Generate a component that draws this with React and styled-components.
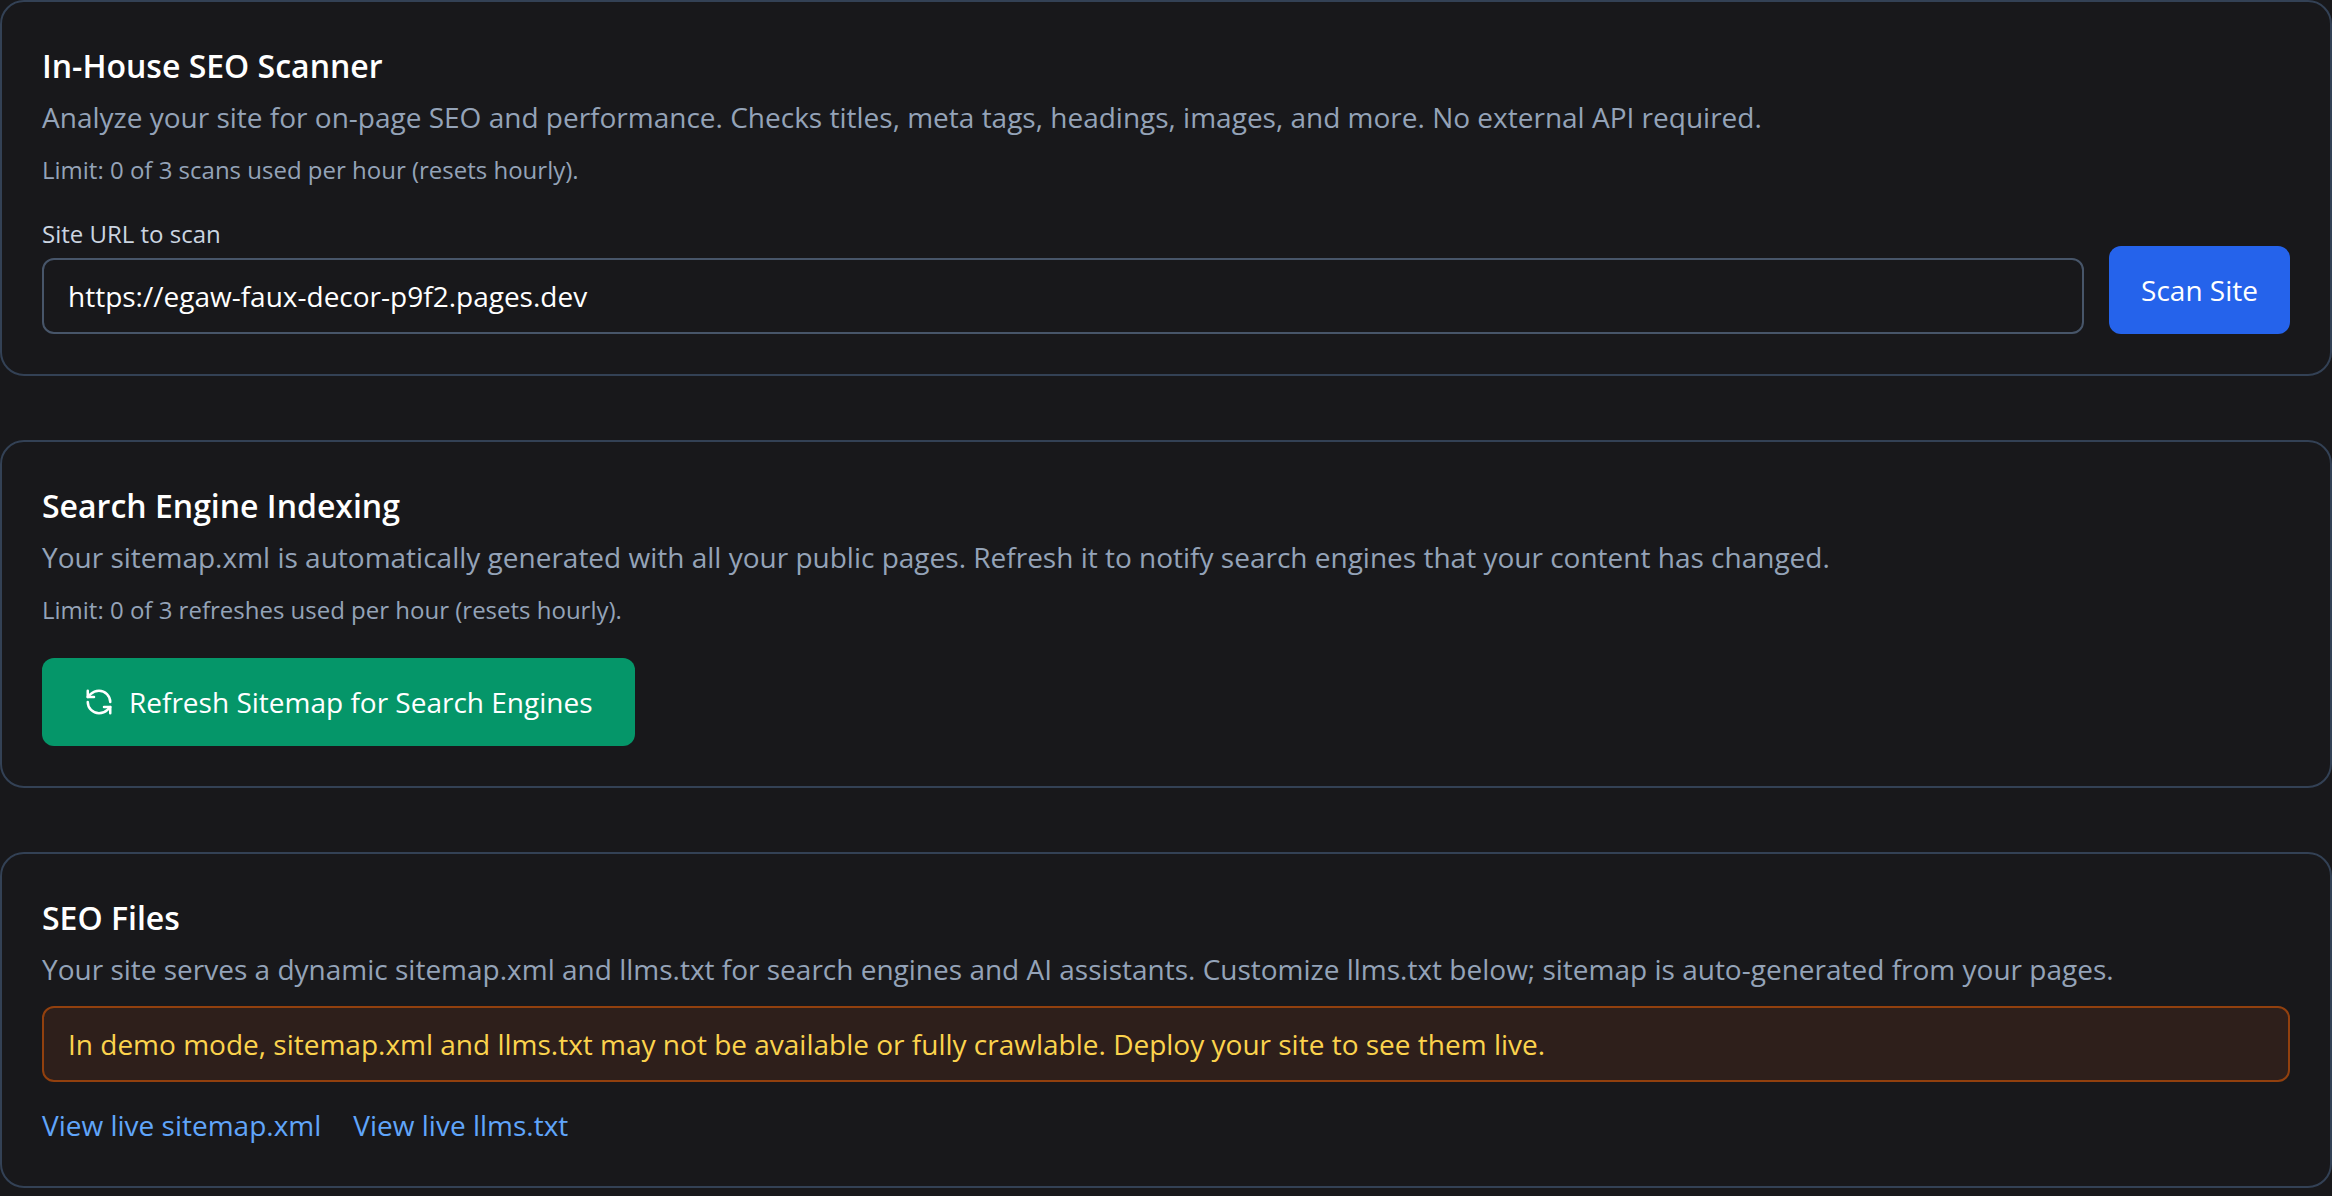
import React from "react";
import styled, { createGlobalStyle } from "styled-components";
import { RefreshCcw } from "lucide-react";

const Global = createGlobalStyle`
  html, body { margin: 0; padding: 0; background: #18181b; }
  body { font-family: "Open Sans", "Noto Sans", sans-serif; }
  * { box-sizing: border-box; }
`;

const Page = styled.div`
  display: flex;
  flex-direction: column;
  gap: 64px;
  width: 2332px;
  height: 1196px;
  overflow: hidden;
  background: #18181b;
`;

const Card = styled.section`
  border: 2px solid #334155;
  border-radius: 24px;
  padding: 40px;
`;

const Title = styled.h2`
  margin: 0;
  font-size: 32px;
  line-height: 48px;
  font-weight: 600;
  color: #ffffff;
`;

const Description = styled.p`
  margin: 9px 0 0;
  font-size: 28px;
  line-height: 36px;
  color: #94a3b8;
`;

const Limit = styled.p`
  margin: 20px 0 0;
  font-size: 24px;
  line-height: 30px;
  color: #94a3b8;
`;

const Row = styled.div`
  display: flex;
  align-items: flex-end;
  gap: 25px;
  margin-top: 34px;
`;

const Field = styled.div`
  flex: 1;
  display: flex;
  flex-direction: column;
  gap: 9px;
`;

const Label = styled.label`
  font-size: 24px;
  line-height: 30px;
  color: #cbd5e1;
`;

const UrlInput = styled.input`
  height: 76px;
  padding: 0 24px;
  background: transparent;
  border: 2px solid #475569;
  border-radius: 12px;
  outline: none;
  font-family: inherit;
  font-size: 28px;
  color: #ffffff;
`;

const Button = styled.button`
  display: inline-flex;
  align-items: center;
  gap: 15px;
  height: 88px;
  padding: 0 ${(p) => p.$pad}px;
  border: 0;
  border-radius: 12px;
  background: ${(p) => p.$bg};
  font-family: inherit;
  font-size: 28px;
  color: #ffffff;
`;

const GreenButton = styled(Button)`
  margin-top: 33px;
`;

const Alert = styled.div`
  display: flex;
  align-items: center;
  height: 76px;
  margin-top: 19px;
  padding: 0 24px;
  background: #2e1f1b;
  border: 2px solid #92400e;
  border-radius: 12px;
  font-size: 28px;
  color: #fcd34d;
`;

const Links = styled.div`
  display: flex;
  gap: 32px;
  margin-top: 23px;
  font-size: 28px;
  line-height: 41px;
`;

const Link = styled.a`
  color: #60a5fa;
  text-decoration: none;
`;

export default function App() {
  return (
    <Page>
      <Global />
      <Card>
        <Title>In-House SEO Scanner</Title>
        <Description>
          Analyze your site for on-page SEO and performance. Checks titles, meta tags, headings, images, and more. No external API required.
        </Description>
        <Limit>Limit: 0 of 3 scans used per hour (resets hourly).</Limit>
        <Row>
          <Field>
            <Label htmlFor="url">Site URL to scan</Label>
            <UrlInput id="url" defaultValue="https://egaw-faux-decor-p9f2.pages.dev" />
          </Field>
          <Button $bg="#2563eb" $pad={32}>Scan Site</Button>
        </Row>
      </Card>
      <Card>
        <Title>Search Engine Indexing</Title>
        <Description>
          Your sitemap.xml is automatically generated with all your public pages. Refresh it to notify search engines that your content has changed.
        </Description>
        <Limit>Limit: 0 of 3 refreshes used per hour (resets hourly).</Limit>
        <GreenButton $bg="#059669" $pad={42}>
          <RefreshCcw size={30} strokeWidth={2} />
          Refresh Sitemap for Search Engines
        </GreenButton>
      </Card>
      <Card>
        <Title>SEO Files</Title>
        <Description>
          Your site serves a dynamic sitemap.xml and llms.txt for search engines and AI assistants. Customize llms.txt below; sitemap is auto-generated from your pages.
        </Description>
        <Alert>In demo mode, sitemap.xml and llms.txt may not be available or fully crawlable. Deploy your site to see them live.</Alert>
        <Links>
          <Link href="#sitemap">View live sitemap.xml</Link>
          <Link href="#llms">View live llms.txt</Link>
        </Links>
      </Card>
    </Page>
  );
}
